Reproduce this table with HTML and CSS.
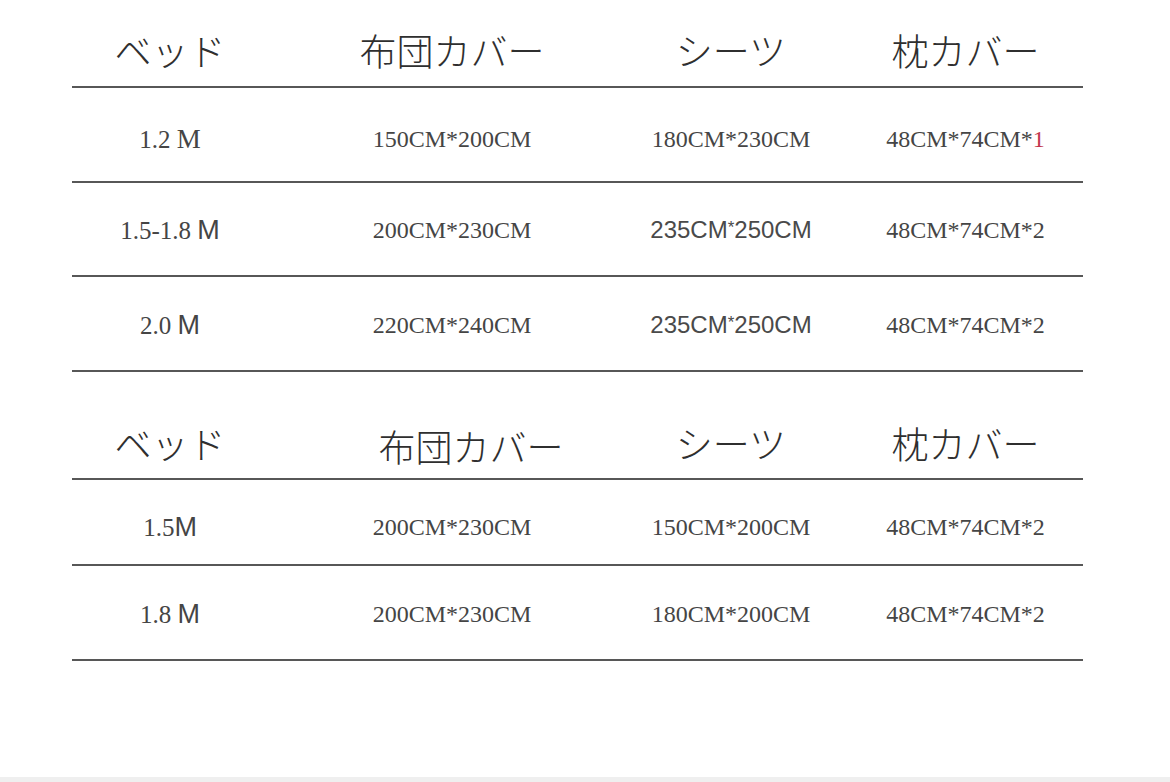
FILE: index.html
```html
<!DOCTYPE html>
<html lang="ja">
<head>
<meta charset="utf-8">
<title>サイズ表</title>
<link rel="stylesheet" href="styles.css">
</head>
<body>
<main class="page">
  <section class="table">
    <div class="row head h1">
      <div class="cell c1">ベッド</div>
      <div class="cell c2">布団カバー</div>
      <div class="cell c3">シーツ</div>
      <div class="cell c4">枕カバー</div>
    </div>
    <div class="row body r1">
      <div class="cell c1">1.2 <span class="serif-m">M</span></div>
      <div class="cell c2">150CM*200CM</div>
      <div class="cell c3">180CM*230CM</div>
      <div class="cell c4">48CM*74CM*<span class="red">1</span></div>
    </div>
    <div class="row body r2">
      <div class="cell c1">1.5-1.8 <span class="sans-m">M</span></div>
      <div class="cell c2">200CM*230CM</div>
      <div class="cell c3 sans">235CM<span class="ast">*</span>250CM</div>
      <div class="cell c4">48CM*74CM*2</div>
    </div>
    <div class="row body r3">
      <div class="cell c1">2.0 <span class="sans-m">M</span></div>
      <div class="cell c2">220CM*240CM</div>
      <div class="cell c3 sans">235CM<span class="ast">*</span>250CM</div>
      <div class="cell c4">48CM*74CM*2</div>
    </div>
    <div class="row head h2">
      <div class="cell c1">ベッド</div>
      <div class="cell c2 shift">布団カバー</div>
      <div class="cell c3">シーツ</div>
      <div class="cell c4">枕カバー</div>
    </div>
    <div class="row body r4">
      <div class="cell c1">1.5<span class="sans-m">M</span></div>
      <div class="cell c2">200CM*230CM</div>
      <div class="cell c3">150CM*200CM</div>
      <div class="cell c4">48CM*74CM*2</div>
    </div>
    <div class="row body r5">
      <div class="cell c1">1.8 <span class="sans-m">M</span></div>
      <div class="cell c2">200CM*230CM</div>
      <div class="cell c3">180CM*200CM</div>
      <div class="cell c4">48CM*74CM*2</div>
    </div>
  </section>
  <div class="spacer"></div>
  <div class="bottom-band"></div>
</main>
</body>
</html>
```

FILE: styles.css
```css
* { box-sizing: border-box; }
html, body { margin: 0; padding: 0; background: #ffffff; }
.page {
  width: 1170px;
  height: 782px;
  display: flex;
  flex-direction: column;
  overflow: hidden;
}
.table {
  margin-left: 72px;
  width: 1011px;
  display: flex;
  flex-direction: column;
}
.row {
  display: grid;
  grid-template-columns: 196px 368px 190px 257px;
  align-items: center;
  border-bottom: 2px solid #575757;
}
.cell {
  text-align: center;
  line-height: 1;
  white-space: nowrap;
}
.c4 { padding-left: 22px; }
.head .cell {
  font-family: "Noto Sans CJK JP", "Noto Sans", sans-serif;
  font-weight: 300;
  font-size: 37px;
  color: #2f2f2f;
}
.body .cell {
  font-family: "Liberation Serif", "Times New Roman", serif;
  font-size: 24px;
  color: #454545;
}
.body .c1 { font-size: 25px; }
.body .sans {
  font-family: "Liberation Sans", Arial, sans-serif;
  font-size: 24px;
  color: #4a4a4a;
}
.sans-m {
  font-family: "Liberation Sans", Arial, sans-serif;
  font-size: 27px;
}
.serif-m { font-size: 27px; }
.ast {
  font-size: 17px;
  vertical-align: 5px;
}
.red { color: #c2364c; }
.h1 { height: 88px; padding-top: 14px; }
.r1 { height: 95px; padding-top: 9px; }
.r2 { height: 94px; padding-top: 2px; }
.r3 { height: 95px; padding-top: 3px; }
.h2 { height: 108px; padding-top: 36px; }
.h2 .shift { padding-left: 38px; padding-top: 6px; }
.r4 { height: 86px; padding-top: 10px; }
.r5 { height: 95px; padding-top: 3px; }
.spacer { flex: 1; }
.bottom-band {
  height: 5px;
  background: #efefef;
}
```
